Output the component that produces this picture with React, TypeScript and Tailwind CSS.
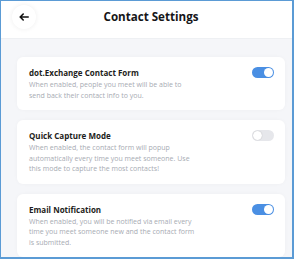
import React from "react";

function Toggle({ on }: { on: boolean }) {
  return (
    <div
      className={
        on
          ? "relative h-[11px] w-[22px] shrink-0 rounded-full bg-[#4a8fe3]"
          : "relative h-[11px] w-[22px] shrink-0 rounded-full bg-[#e6e7eb]"
      }
    >
      <div
        className={
          on
            ? "absolute right-[1px] top-[1px] h-[9px] w-[9px] rounded-full bg-white"
            : "absolute left-[1px] top-[1px] h-[9px] w-[9px] rounded-full bg-white shadow-[0_0_1px_rgba(0,0,0,0.3)]"
        }
      />
    </div>
  );
}

function Card({ title, desc, on }: { title: string; desc: string; on: boolean }) {
  return (
    <div className="flex items-start justify-between rounded-[6px] bg-white pl-[12px] pr-[11px] pt-[10px] pb-[9px] shadow-[0_0_4px_rgba(30,40,60,0.03)]">
      <div className="flex flex-col">
        <div className="text-[8px] font-bold leading-[12px] text-[#1d1d20]">{title}</div>
        <div className="mt-[1px] w-[169px] text-[7px] leading-[10.5px] text-[#a7abb3]">{desc}</div>
      </div>
      <Toggle on={on} />
    </div>
  );
}

export default function App() {
  return (
    <div
      className="h-[259px] w-[294px] overflow-hidden border-l border-t border-r-2 border-b-2 border-[#5b9bd5] bg-[#f5f6f9]"
      style={{ fontFamily: '"Open Sans", "Noto Sans", sans-serif' }}
    >
      <div className="w-[300px]">
        <div className="flex h-[38px] items-center border-b border-[#eef0f3] bg-white pb-[6px]">
          <div className="ml-[11px] flex h-[24px] w-[24px] items-center justify-center rounded-full bg-white shadow-[0_0_5px_rgba(0,0,0,0.07)]">
            <svg width="10" height="8" viewBox="0 0 10 8" fill="none">
              <path d="M9.2 4H1.3M4.2 1L1.2 4l3 3" stroke="#111" strokeWidth="1.6" strokeLinecap="round" strokeLinejoin="round" />
            </svg>
          </div>
          <div className="flex-1 text-center text-[11.6px] font-bold leading-[16px] text-[#151518]">
            Contact Settings
          </div>
          <div className="mr-[11px] w-[24px]" />
        </div>
        <div className="flex flex-col gap-[10px] px-[16px] pt-[18px]">
          <Card
            title="dot.Exchange Contact Form"
            desc="When enabled, people you meet will be able to send back their contact info to you."
            on={true}
          />
          <Card
            title="Quick Capture Mode"
            desc="When enabled, the contact form will popup automatically every time you meet someone. Use this mode to capture the most contacts!"
            on={false}
          />
          <Card
            title="Email Notification"
            desc="When enabled, you will be notified via email every time you meet someone new and the contact form is submitted."
            on={true}
          />
        </div>
      </div>
    </div>
  );
}
